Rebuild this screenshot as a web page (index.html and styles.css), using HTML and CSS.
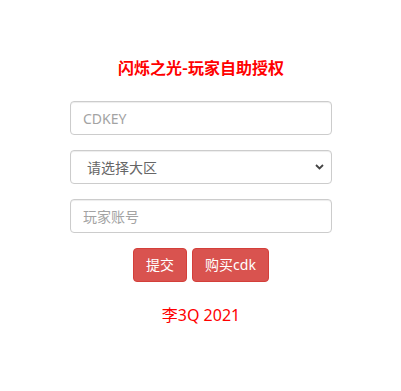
FILE: index.html
```html
<!DOCTYPE html>
<html lang="zh-CN">
<head>
<meta charset="utf-8">
<title>闪烁之光-玩家自助授权</title>
<link rel="stylesheet" href="styles.css">
</head>
<body>
<main class="page">
  <h1 class="title">闪烁之光-玩家自助授权</h1>
  <form class="form">
    <input class="field" type="text" placeholder="CDKEY">
    <select class="field select">
      <option>请选择大区</option>
    </select>
    <input class="field" type="text" placeholder="玩家账号">
    <div class="actions">
      <button class="btn" type="button">提交</button>
      <button class="btn" type="button">购买cdk</button>
    </div>
  </form>
  <p class="footer">李3Q 2021</p>
</main>
</body>
</html>
```
FILE: styles.css
```css
* { box-sizing: border-box; }
html, body { margin: 0; padding: 0; background: #fff; }
body {
  font-family: "Noto Sans", "Noto Sans CJK SC", sans-serif;
  font-size: 14px;
  color: #333;
}
.page {
  display: flex;
  flex-direction: column;
  align-items: center;
  padding-top: 55px;
  padding-left: 1px;
}
.title {
  margin: 0;
  font-size: 16px;
  line-height: 24px;
  font-weight: bold;
  color: #f00;
  font-family: "Noto Sans CJK SC", sans-serif;
}
.form {
  margin-top: 22px;
  width: 262px;
  display: flex;
  flex-direction: column;
  gap: 15px;
}
.field {
  display: block;
  width: 100%;
  height: 34px;
  padding: 6px 12px;
  border: 1px solid #ccc;
  border-radius: 4px;
  background: #fff;
  font-family: "Noto Sans", "Noto Sans CJK SC", sans-serif;
  font-size: 14px;
  color: #555;
  box-shadow: inset 0 1px 1px rgba(0,0,0,.075);
  outline: none;
}
.field::placeholder { color: #a3a3a3; }
.select {
  appearance: none;
  -webkit-appearance: none;
  padding-left: 16px;
  color: #666;
  background-image: url("data:image/svg+xml;utf8,<svg xmlns='http://www.w3.org/2000/svg' width='9' height='6' viewBox='0 0 9 6'><path d='M1 1l3.5 3.5L8 1' fill='none' stroke='%23444' stroke-width='1.8'/></svg>");
  background-repeat: no-repeat;
  background-position: right 7px center;
  font-family: "Noto Sans CJK SC", sans-serif;
}
.actions {
  display: flex;
  justify-content: center;
  gap: 5px;
}
.btn {
  height: 34px;
  padding: 6px 12px;
  border: 1px solid #d43f3a;
  border-radius: 4px;
  background: #d9534f;
  color: #fff;
  font-family: "Noto Sans", "Noto Sans CJK SC", sans-serif;
  font-size: 14px;
  line-height: 20px;
}
.footer {
  margin: 22px 0 0;
  font-size: 16px;
  line-height: 22px;
  color: #f00;
  font-family: "Noto Sans", "Noto Sans CJK SC", sans-serif;
}
```
